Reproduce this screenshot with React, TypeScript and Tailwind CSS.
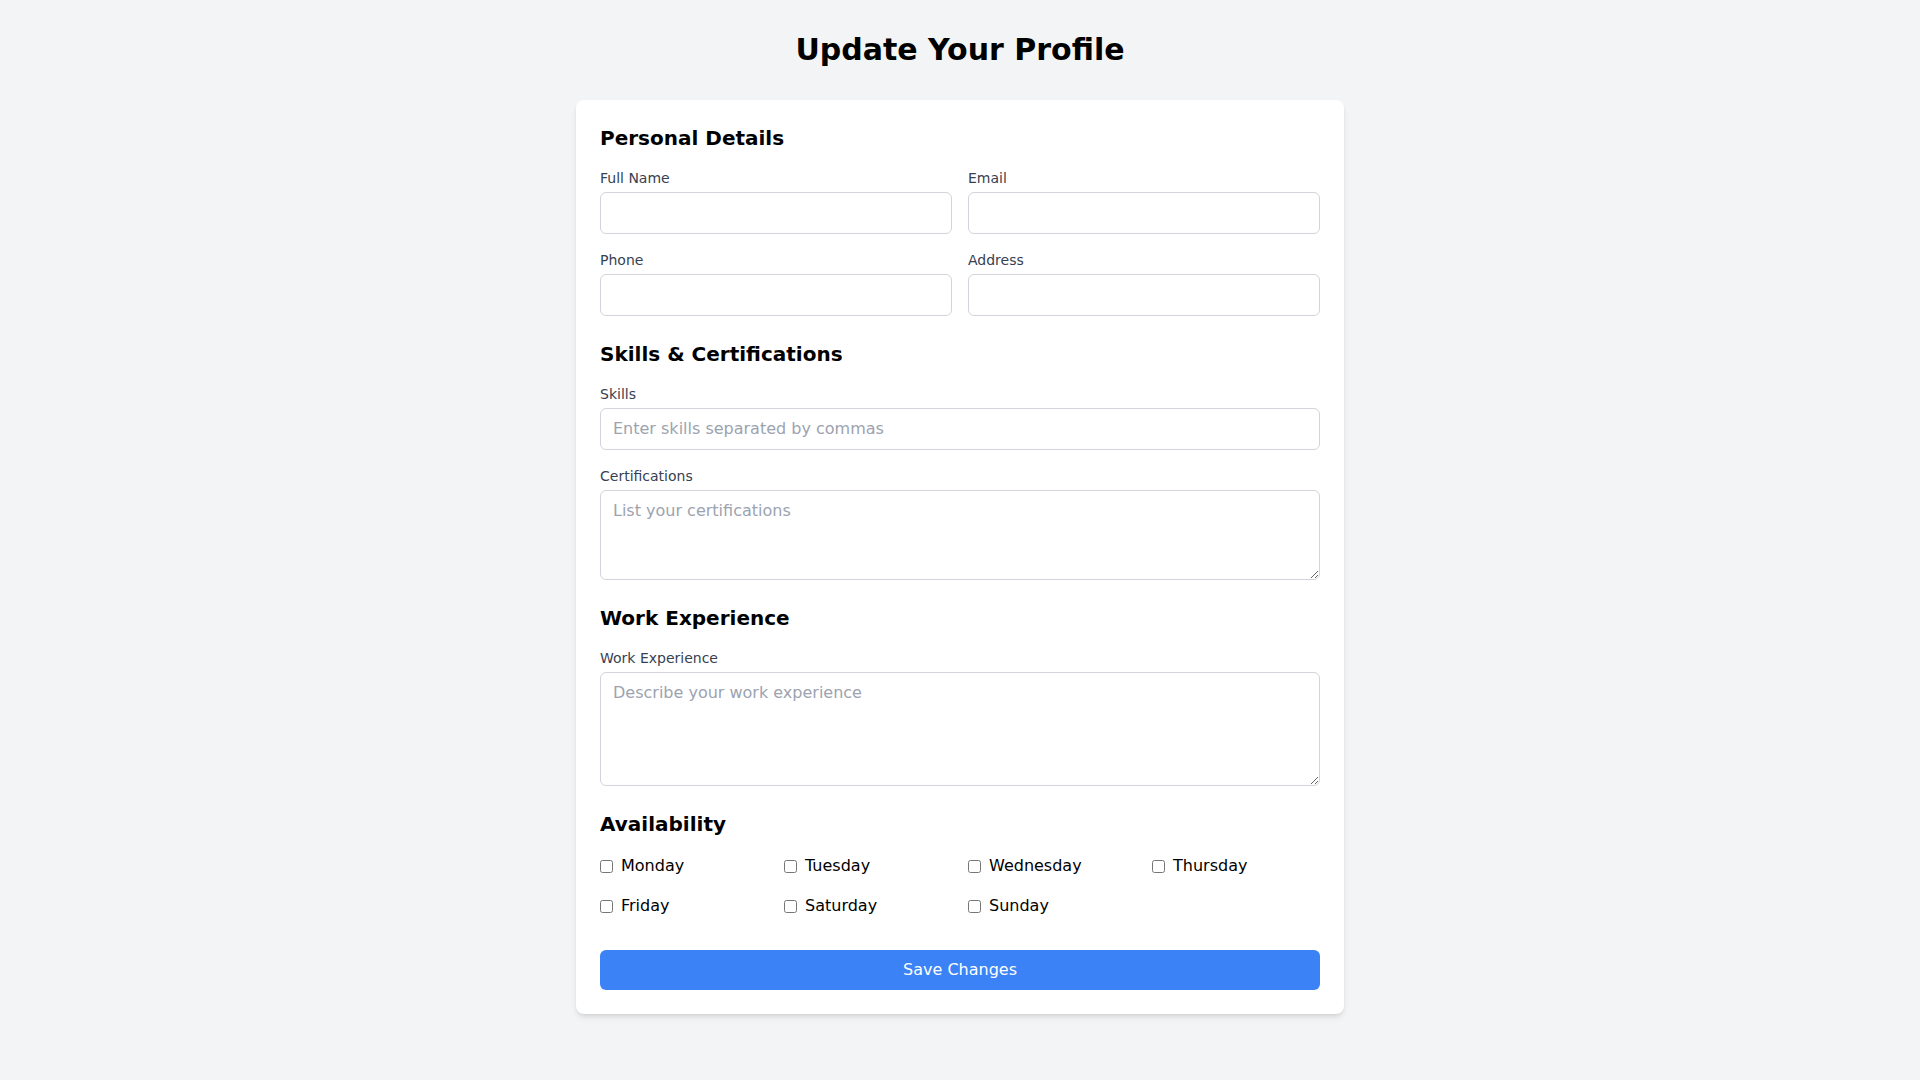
import React from "react";

const font = { fontFamily: '"DejaVu Sans", sans-serif' };

function Field({ label, placeholder }: { label: string; placeholder?: string }) {
  return (
    <div>
      <label className="block text-sm text-[#374151] mb-1">{label}</label>
      <input
        type="text"
        placeholder={placeholder}
        className="w-full border border-[#d1d5db] rounded-md px-3 py-2 text-base leading-6 placeholder-[#9ca3af] bg-white outline-none"
      />
    </div>
  );
}

function Area({ label, placeholder, rows }: { label: string; placeholder: string; rows: number }) {
  return (
    <div>
      <label className="block text-sm text-[#374151] mb-1">{label}</label>
      <textarea
        rows={rows}
        placeholder={placeholder}
        className="block w-full border border-[#d1d5db] rounded-md px-3 py-2 text-base leading-6 placeholder-[#9ca3af] bg-white outline-none"
      />
    </div>
  );
}

const days = ["Monday", "Tuesday", "Wednesday", "Thursday", "Friday", "Saturday", "Sunday"];

export default function App() {
  return (
    <div className="min-h-screen bg-[#f3f4f6] py-8" style={font}>
      <h1 className="text-3xl font-bold text-center text-black mb-8">Update Your Profile</h1>
      <div className="max-w-3xl mx-auto bg-white rounded-lg shadow-md p-6">
        <div className="space-y-6">
          <section>
            <h2 className="text-xl font-bold text-black mb-4">Personal Details</h2>
            <div className="grid grid-cols-2 gap-4">
              <Field label="Full Name" />
              <Field label="Email" />
              <Field label="Phone" />
              <Field label="Address" />
            </div>
          </section>
          <section>
            <h2 className="text-xl font-bold text-black mb-4">Skills &amp; Certifications</h2>
            <div className="space-y-4">
              <Field label="Skills" placeholder="Enter skills separated by commas" />
              <Area label="Certifications" placeholder="List your certifications" rows={3} />
            </div>
          </section>
          <section>
            <h2 className="text-xl font-bold text-black mb-4">Work Experience</h2>
            <Area label="Work Experience" placeholder="Describe your work experience" rows={4} />
          </section>
          <section>
            <h2 className="text-xl font-bold text-black mb-4">Availability</h2>
            <div className="grid grid-cols-4 gap-4">
              {days.map((d) => (
                <label key={d} className="flex items-center gap-2 text-base leading-6 text-black">
                  <input type="checkbox" className="w-[13px] h-[13px]" />
                  <span>{d}</span>
                </label>
              ))}
            </div>
          </section>
        </div>
        <button className="mt-8 w-full bg-[#3b82f6] text-white text-base leading-6 py-2 rounded-md">
          Save Changes
        </button>
      </div>
    </div>
  );
}
